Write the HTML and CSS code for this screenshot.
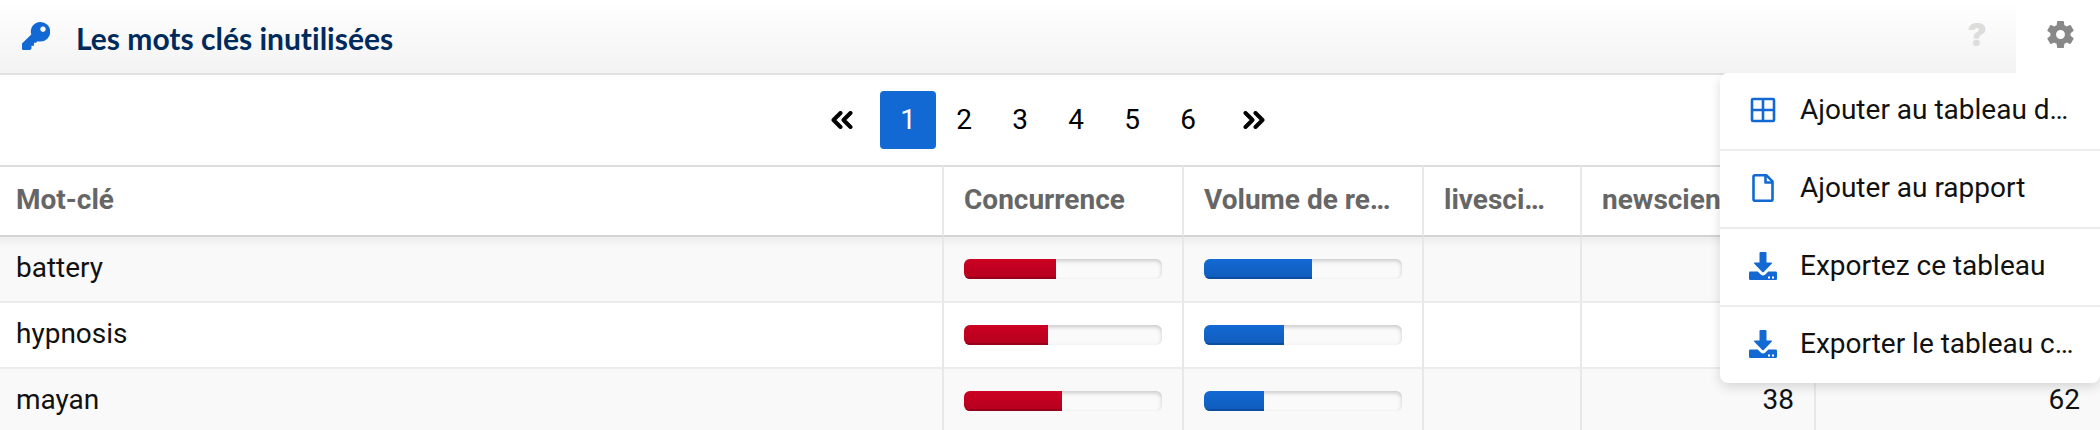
FILE: index.html
```html
<!DOCTYPE html>
<html lang="fr" dir="ltr">
    <head>
        <meta charset="utf-8">
        <title>Les mots clés inutilisées</title>
        <link rel="stylesheet" href="styles.css">
    </head>
    <body>
        <section class="widget">
            <header class="header">
                <svg class="icon key" viewBox="0 0 28 28" aria-hidden="true">
                    <path fill-rule="evenodd" d="M18.500 0a9.500 9.500 0 0 1 0 19.500q-1.500 0-3-.300l-1.500 1.600H12v3H9.500v2.800l-1.300 1.400H1.200Q0 28 0 26.800v-5.300L9.300 12.500A9.500 9.500 0 0 1 18.500 0zM21 4.500a2.700 2.700 0 1 0 .010 0z"/>
                </svg>
                <h2>Les mots clés inutilisées</h2>
                <button type="button" class="help" aria-label="Aide">?</button>
                <div class="settings">
                    <button type="button" class="gear" aria-label="Options">
                        <svg class="icon" viewBox="2 2 20 20" aria-hidden="true">
                            <path d="M19.430 12.980c.040-.320.070-.640.070-.980s-.030-.660-.070-.980l2.110-1.650c.190-.150.240-.420.120-.640l-2-3.460c-.120-.220-.390-.300-.610-.220l-2.490 1c-.520-.400-1.080-.730-1.690-.980l-.380-2.650A.488.488 0 0 0 14 2h-4c-.250 0-.460.180-.490.420l-.380 2.650c-.610.250-1.170.590-1.690.980l-2.490-1c-.230-.090-.490 0-.610.220l-2 3.460c-.130.220-.070.490.120.640l2.110 1.650c-.040.320-.070.650-.070.980s.030.660.070.980l-2.110 1.650c-.190.150-.240.420-.120.640l2 3.460c.120.220.390.300.610.220l2.490-1c.520.400 1.080.730 1.690.980l.380 2.650c.030.240.240.420.490.420h4c.250 0 .460-.180.490-.420l.380-2.650c.610-.250 1.170-.590 1.690-.980l2.490 1c.230.090.490 0 .610-.220l2-3.460c.120-.220.070-.490-.120-.640l-2.110-1.650zM12 15.300a3.300 3.300 0 1 1 0-6.600 3.300 3.300 0 0 1 0 6.600z"/>
                        </svg>
                    </button>
                    <ul class="menu">
                        <li><button type="button">
                            <svg class="icon line" viewBox="0 0 28 28" aria-hidden="true">
                                <rect x="3" y="3" width="22" height="22" rx="1"/>
                                <path d="M14 3v22M3 14h22"/>
                            </svg>
                            <span>Ajouter au tableau de bord</span>
                        </button></li>
                        <li><button type="button">
                            <svg class="icon line" viewBox="0 0 28 28" aria-hidden="true">
                                <path d="M6 1.300h11.500l6 6V25.200q0 1.500-1.500 1.500H6q-1.500 0-1.500-1.500V2.800Q4.500 1.300 6 1.300z"/>
                                <path d="M16.500 1.300v7.200h7"/>
                            </svg>
                            <span>Ajouter au rapport</span>
                        </button></li>
                        <li><button type="button">
                            <svg class="icon" viewBox="0 0 28 28" aria-hidden="true">
                                <path d="M10.500 1q0-1 1-1h5q1 0 1 1v9.500h4.700q1.500 0 .5 1.200l-7.700 8q-1 1-2 0l-7.700-8q-1-1.200.5-1.200h4.700z"/>
                                <path fill-rule="evenodd" d="M1.200 19.500h7.500l3 3q2.300 2 4.600 0l3-3h7.500q1.200 0 1.200 1.200v6.100q0 1.200-1.200 1.200H1.200Q0 28 0 26.800v-6.100q0-1.200 1.200-1.200zM19 24.500v2h2v-2zM23 24.500v2h2v-2z"/>
                            </svg>
                            <span>Exportez ce tableau</span>
                        </button></li>
                        <li><button type="button">
                            <svg class="icon" viewBox="0 0 28 28" aria-hidden="true">
                                <path d="M10.500 1q0-1 1-1h5q1 0 1 1v9.500h4.700q1.500 0 .5 1.200l-7.700 8q-1 1-2 0l-7.700-8q-1-1.200.5-1.200h4.700z"/>
                                <path fill-rule="evenodd" d="M1.200 19.500h7.500l3 3q2.300 2 4.600 0l3-3h7.500q1.200 0 1.200 1.200v6.100q0 1.200-1.200 1.200H1.200Q0 28 0 26.800v-6.100q0-1.200 1.200-1.200zM19 24.500v2h2v-2zM23 24.500v2h2v-2z"/>
                            </svg>
                            <span>Exporter le tableau complet</span>
                        </button></li>
                    </ul>
                </div>
            </header>
            <nav class="pages" aria-label="Pages">
                <a class="arrow" href="#" aria-label="Page précédente">
                    <svg class="chevrons" viewBox="0 0 22 18" aria-hidden="true">
                        <path d="M9.500 2 2.500 9l7 7M19.500 2l-7 7 7 7"/>
                    </svg>
                </a>
                <a class="active" href="#">1</a>
                <a href="#">2</a>
                <a href="#">3</a>
                <a href="#">4</a>
                <a href="#">5</a>
                <a href="#">6</a>
                <a class="arrow" href="#" aria-label="Page suivante">
                    <svg class="chevrons" viewBox="0 0 22 18" aria-hidden="true">
                        <path d="M2.500 2l7 7-7 7M12.500 2l7 7-7 7"/>
                    </svg>
                </a>
            </nav>
            <table class="keywords">
                <thead>
                    <tr>
                        <th>Mot-clé</th>
                        <th class="bar-col">Concurrence</th>
                        <th class="bar-col">Volume de recherche</th>
                        <th class="site1">livescience.com</th>
                        <th class="site2">newscientist.com</th>
                        <th class="site3"></th>
                    </tr>
                </thead>
                <tbody>
                    <tr>
                        <td>battery</td>
                        <td><div class="bar red"><div style="width: 46.500%"></div></div></td>
                        <td><div class="bar blue"><div style="width: 54.500%"></div></div></td>
                        <td></td>
                        <td></td>
                        <td></td>
                    </tr>
                    <tr>
                        <td>hypnosis</td>
                        <td><div class="bar red"><div style="width: 42.500%"></div></div></td>
                        <td><div class="bar blue"><div style="width: 40.500%"></div></div></td>
                        <td></td>
                        <td></td>
                        <td></td>
                    </tr>
                    <tr>
                        <td>mayan</td>
                        <td><div class="bar red"><div style="width: 49.500%"></div></div></td>
                        <td><div class="bar blue"><div style="width: 30.500%"></div></div></td>
                        <td></td>
                        <td class="number">38</td>
                        <td class="number">62</td>
                    </tr>
                </tbody>
            </table>
        </section>
    </body>
</html>
```
FILE: styles.css
```css
*{
    box-sizing: border-box;
}
body{
    margin: 0;
    background-color: white;
    color: #111;
    font-family: Roboto, "Liberation Sans", sans-serif;
    font-size: 28px;
}
button{
    border: 0;
    padding: 0;
    background: none;
    color: inherit;
    font: inherit;
    cursor: pointer;
}
.icon{
    flex: none;
    width: 28px;
    height: 28px;
    fill: #1269d3;
}
.line{
    fill: none;
    stroke: #1269d3;
    stroke-width: 2.6;
    stroke-linejoin: round;
}

/* header */
.header{
    display: flex;
    align-items: stretch;
    height: 75px;
    border-bottom: 2px solid #e2e2e2;
    background: linear-gradient(white, #f3f3f3);
}
.key{
    margin: 22px 26px 0 22px;
}
h2{
    flex: 1;
    margin: 0;
    padding-top: 4px;
    color: #002a5c;
    font-family: Lato, sans-serif;
    font-size: 30px;
    font-variant-ligatures: none;
    line-height: 68px;
    white-space: nowrap;
}
.help{
    width: 78px;
    padding-bottom: 5px;
    color: #ddd;
    font-family: Inter, sans-serif;
    font-size: 32px;
    font-weight: 900;
}
.settings{
    position: relative;
    background-color: white;
}
.gear{
    display: flex;
    justify-content: center;
    width: 84px;
    height: 73px;
    padding-top: 21px;
    padding-left: 4px;
}
.gear .icon{
    width: 27px;
    height: 27px;
    fill: #888;
}

/* dropdown */
.menu{
    position: absolute;
    top: 73px;
    right: 0;
    width: 380px;
    margin: 0;
    padding: 0;
    list-style: none;
    border-radius: 8px 0 8px 8px;
    background-color: white;
    box-shadow: 0 4px 12px rgba(0,0,0,0.14);
    clip-path: inset(0 0 -30px -30px);
}
.menu li + li{
    border-top: 2px solid #ececec;
}
.menu button{
    display: flex;
    align-items: center;
    gap: 23px;
    width: 100%;
    height: 76px;
    padding: 0 24px 2px 29px;
}
.menu span{
    padding-bottom: 2px;
    overflow: hidden;
    text-overflow: ellipsis;
    white-space: nowrap;
}

/* pagination */
.pages{
    display: flex;
    justify-content: center;
    padding: 16px 4px 16px 0;
}
.pages a{
    width: 56px;
    border-radius: 4px;
    color: black;
    line-height: 58px;
    text-align: center;
    text-decoration: none;
}
.pages .active{
    background-color: #1269d3;
    color: white;
}
.pages .arrow{
    display: flex;
    align-items: center;
    justify-content: center;
    margin: 0 10px;
}
.chevrons{
    width: 22px;
    height: 18px;
    fill: none;
    stroke: black;
    stroke-width: 4;
    stroke-linecap: round;
    stroke-linejoin: round;
}

/* table */
.keywords{
    width: 100%;
    table-layout: fixed;
    border-collapse: separate;
    border-spacing: 0;
}
th, td{
    height: 66px;
    padding: 0 20px 2px;
    border-right: 2px solid #e8e8e8;
    border-bottom: 2px solid #ececec;
    line-height: 32px;
    text-align: left;
    overflow: hidden;
    text-overflow: ellipsis;
    white-space: nowrap;
}
th{
    height: 72px;
    border-top: 2px solid #ddd;
    border-bottom-color: #d4d4d4;
    color: #666;
}
th:first-child, td:first-child{
    padding-left: 16px;
}
th:last-child, td:last-child{
    border-right: 0;
}
.bar-col{
    width: 240px;
}
.site1{
    width: 158px;
}
.site2{
    width: 234px;
}
.site3{
    width: 284px;
}
tbody tr:nth-child(odd){
    background-color: #f9f9f9;
}
tbody tr:first-child td{
    background: linear-gradient(rgba(0,0,0,0.05), rgba(0,0,0,0)) no-repeat 0 0 / 100% 10px;
}
.number{
    text-align: right;
}
.bar{
    overflow: hidden;
    height: 20px;
    margin-top: 2px;
    border-radius: 6px;
    background-color: #fafafa;
    box-shadow: inset 0 2px 4px rgba(0,0,0,0.2);
}
.bar div{
    height: 100%;
}
.red div{
    background: linear-gradient(#cc0022, #b5001e);
    box-shadow: inset 0 -2px 0 #97001a;
}
.blue div{
    background: linear-gradient(#1269d3, #115cbc);
    box-shadow: inset 0 -2px 0 #0d4da0;
}
```
